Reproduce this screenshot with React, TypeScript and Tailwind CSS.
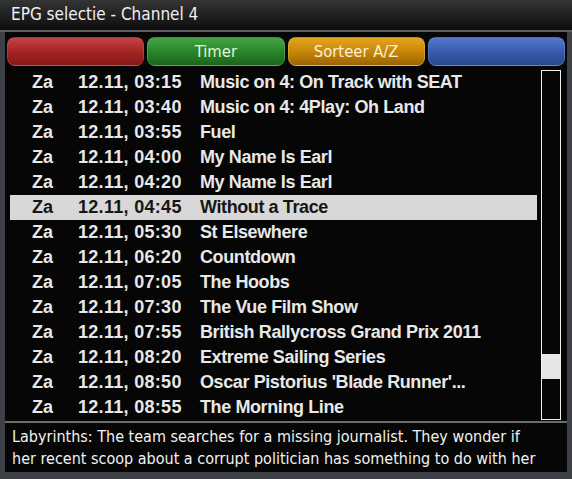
import React from "react";

interface EpgRow {
  day: string;
  time: string;
  title: string;
}

const rows: EpgRow[] = [
  { day: "Za", time: "12.11, 03:15", title: "Music on 4: On Track with SEAT" },
  { day: "Za", time: "12.11, 03:40", title: "Music on 4: 4Play: Oh Land" },
  { day: "Za", time: "12.11, 03:55", title: "Fuel" },
  { day: "Za", time: "12.11, 04:00", title: "My Name Is Earl" },
  { day: "Za", time: "12.11, 04:20", title: "My Name Is Earl" },
  { day: "Za", time: "12.11, 04:45", title: "Without a Trace" },
  { day: "Za", time: "12.11, 05:30", title: "St Elsewhere" },
  { day: "Za", time: "12.11, 06:20", title: "Countdown" },
  { day: "Za", time: "12.11, 07:05", title: "The Hoobs" },
  { day: "Za", time: "12.11, 07:30", title: "The Vue Film Show" },
  { day: "Za", time: "12.11, 07:55", title: "British Rallycross Grand Prix 2011" },
  { day: "Za", time: "12.11, 08:20", title: "Extreme Sailing Series" },
  { day: "Za", time: "12.11, 08:50", title: "Oscar Pistorius 'Blade Runner'..." },
  { day: "Za", time: "12.11, 08:55", title: "The Morning Line" },
];

const selected = 5;

export default function App() {
  return (
    <div className="w-[572px] h-[479px] bg-[#3d4045] flex flex-col overflow-hidden font-['DejaVu_Sans_Condensed','Noto_Sans',sans-serif]">
      {/* Title bar */}
      <div className="h-[30px] shrink-0 bg-gradient-to-b from-[#353535] to-[#0e0e0e] px-[11px] flex items-center text-[17px] text-[#f0f0f0]">
        EPG selectie - Channel 4
      </div>
      <div className="h-[2px] shrink-0 bg-[#5c5e62]" />

      {/* Main panel */}
      <div className="flex-1 mx-[5px] mb-[7px] bg-[#060606] flex flex-col">
        {/* Colour buttons */}
        <div className="grid grid-cols-4 gap-[3px] px-[2px] pt-[5px] h-[34px] text-[16.5px] text-center leading-[27px]">
          <div className="rounded-[8px] bg-gradient-to-b from-[#c44444] via-[#a52424] to-[#861818] border border-[#d06060]/40" />
          <div className="rounded-[8px] bg-gradient-to-b from-[#44a444] via-[#2a862a] to-[#1a661a] border border-[#70c070]/40 text-[#e4f6dc]">
            Timer
          </div>
          <div className="rounded-[8px] bg-gradient-to-b from-[#e6a41c] via-[#c6880a] to-[#9c6400] border border-[#f0c060]/40 text-[#fdf0d6]">
            Sorteer A/Z
          </div>
          <div className="rounded-[8px] bg-gradient-to-b from-[#5678cc] via-[#385cac] to-[#26488e] border border-[#80a0e0]/40" />
        </div>

        {/* List + scrollbar */}
        <div className="flex pt-[4px] h-[354px]">
          <div className="w-[532px] pl-[5px] flex flex-col font-['Liberation_Sans',Arial,sans-serif] font-bold text-[18px]">
            {rows.map((r, i) => (
              <div
                key={i}
                className={
                  "h-[25px] flex items-center " +
                  (i === selected ? "bg-[#d8d8d8] text-[#161616]" : "text-[#e8e8e8]")
                }
              >
                <span className="w-[68px] pl-[22px]">{r.day}</span>
                <span className="w-[122px] tracking-[0.3px]">{r.time}</span>
                <span className="tracking-[-0.4px] whitespace-nowrap">{r.title}</span>
              </div>
            ))}
          </div>
          <div className="ml-[4px] w-[20px] h-[350px] border border-[#f2f2f2] flex flex-col">
            <div className="h-[283px]" />
            <div className="h-[25px] bg-[#e6e6e6]" />
          </div>
        </div>

        {/* Separator */}
        <div className="h-[2px] mt-[1px] bg-[#6a6c70]" />

        {/* Description */}
        <div className="px-[7px] pt-[3px] text-[16px] leading-[22px] text-[#f2f2f2] whitespace-nowrap overflow-hidden">
          <div>Labyrinths: The team searches for a missing journalist. They wonder if</div>
          <div>her recent scoop about a corrupt politician has something to do with her</div>
        </div>
      </div>
    </div>
  );
}
